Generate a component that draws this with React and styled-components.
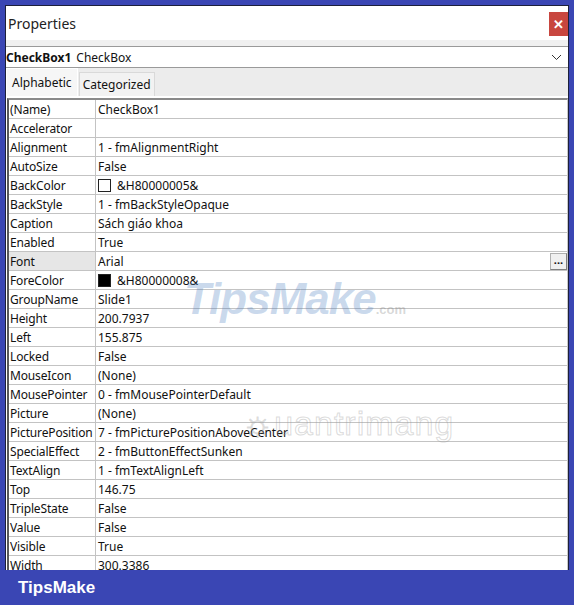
import React from "react";
import styled, { createGlobalStyle } from "styled-components";

const GlobalStyle = createGlobalStyle`
  html, body {
    margin: 0;
    padding: 0;
    background: #3a46b4;
  }
  body {
    font-family: "Noto Sans", "Open Sans", Arial, sans-serif;
  }
`;

const rows = [
  ["(Name)", "CheckBox1"],
  ["Accelerator", ""],
  ["Alignment", "1 - fmAlignmentRight"],
  ["AutoSize", "False"],
  ["BackColor", "&H80000005&", "#ffffff"],
  ["BackStyle", "1 - fmBackStyleOpaque"],
  ["Caption", "Sách giáo khoa"],
  ["Enabled", "True"],
  ["Font", "Arial", null, true],
  ["ForeColor", "&H80000008&", "#000000"],
  ["GroupName", "Slide1"],
  ["Height", "200.7937"],
  ["Left", "155.875"],
  ["Locked", "False"],
  ["MouseIcon", "(None)"],
  ["MousePointer", "0 - fmMousePointerDefault"],
  ["Picture", "(None)"],
  ["PicturePosition", "7 - fmPicturePositionAboveCenter"],
  ["SpecialEffect", "2 - fmButtonEffectSunken"],
  ["TextAlign", "1 - fmTextAlignLeft"],
  ["Top", "146.75"],
  ["TripleState", "False"],
  ["Value", "False"],
  ["Visible", "True"],
  ["Width", "300.3386"],
];

const Frame = styled.div`
  width: 574px;
  height: 605px;
  display: flex;
  flex-direction: column;
  background: #3a46b4;
`;

const Window = styled.div`
  position: relative;
  flex: 1;
  min-height: 0;
  margin: 5px 5px 0 5px;
  border: 1px solid #1c1f3a;
  border-bottom: none;
  background: #ffffff;
  display: flex;
  flex-direction: column;
  overflow: hidden;
`;

const TitleBar = styled.div`
  height: 34px;
  display: flex;
  align-items: center;
  justify-content: space-between;
  padding-left: 2px;
  font-size: 14px;
  color: #222;
`;

const CloseButton = styled.div`
  width: 19px;
  height: 24px;
  margin-top: 2px;
  background: #c8463f;
  color: #fff;
  font-size: 13px;
  font-weight: bold;
  display: flex;
  align-items: center;
  justify-content: center;
`;

const Strip = styled.div`
  height: 6px;
  background: #f0f0f0;
`;

const Combo = styled.div`
  height: 20px;
  border-top: 1px solid #9a9a9a;
  border-bottom: 1px solid #9a9a9a;
  display: flex;
  align-items: center;
  font-size: 12px;
  color: #111;
  padding-right: 6px;
  b {
    font-weight: 700;
    margin-right: 5px;
  }
  span {
    flex: 1;
  }
`;

const TabArea = styled.div`
  height: 28px;
  background: #ececec;
  display: flex;
  align-items: flex-end;
  border-bottom: 2px solid #ffffff;
`;

const Tab = styled.div`
  height: ${(p) => (p.$active ? "27px" : "23px")};
  padding: 0 ${(p) => (p.$active ? "5px" : "3px")};
  display: flex;
  align-items: center;
  font-size: 12px;
  color: #111;
  background: ${(p) => (p.$active ? "#f6f6f6" : "#f2f2f2")};
  border: 1px solid ${(p) => (p.$active ? "#ffffff" : "#d9d9d9")};
  border-bottom: none;
  margin-right: 1px;
`;

const Grid = styled.div`
  margin-left: 1px;
  border-left: 2px solid #5a5a5a;
  border-top: 2px solid #8a8a8a;
  border-right: 1px solid #c8c8c8;
  flex: 1;
  overflow: hidden;
`;

const Row = styled.div`
  display: grid;
  grid-template-columns: 87px 1fr;
  height: 19px;
  border-bottom: 1px solid #c3c3c3;
  box-sizing: border-box;
  font-size: 12px;
  color: #111;
`;

const NameCell = styled.div`
  padding-left: 1px;
  display: flex;
  align-items: center;
  border-right: 1px solid #c3c3c3;
  background: ${(p) => (p.$selected ? "#e6e6e6" : "transparent")};
  white-space: nowrap;
  overflow: hidden;
  letter-spacing: -0.15px;
`;

const ValueCell = styled.div`
  padding-left: 2px;
  display: flex;
  align-items: center;
  white-space: nowrap;
  overflow: hidden;
`;

const Swatch = styled.span`
  width: 13px;
  height: 13px;
  box-sizing: border-box;
  border: 1px solid #222;
  background: ${(p) => p.$color};
  margin-right: 6px;
  flex: none;
`;

const DotsButton = styled.div`
  margin-left: auto;
  width: 17px;
  height: 17px;
  box-sizing: border-box;
  border: 1px solid #b0b0b0;
  border-right-color: #808080;
  border-bottom-color: #808080;
  background: #f0f0f0;
  font-size: 11px;
  font-weight: bold;
  display: flex;
  align-items: center;
  justify-content: center;
  line-height: 1;
  padding-bottom: 3px;
`;

const Watermark = styled.div`
  position: absolute;
  left: ${(p) => p.$x}px;
  top: ${(p) => p.$y}px;
  pointer-events: none;
  white-space: nowrap;
`;

const TipsMark = styled.span`
  font-family: "Liberation Sans", Arial, sans-serif;
  font-weight: 900;
  font-style: italic;
  font-size: 44px;
  letter-spacing: -1px;
  color: rgba(70, 120, 190, 0.28);
  small {
    font-size: 13px;
    font-style: normal;
    letter-spacing: 0;
    color: rgba(120, 120, 120, 0.3);
  }
`;

const QuanMark = styled.span`
  font-family: "Liberation Sans", Arial, sans-serif;
  font-size: 34px;
  color: rgba(255, 255, 255, 0);
  -webkit-text-stroke: 1px rgba(150, 150, 150, 0.35);
  letter-spacing: 1px;
`;

const Footer = styled.div`
  height: 35px;
  flex: none;
  display: flex;
  align-items: center;
  padding-left: 18px;
  font-family: "Liberation Sans", Arial, sans-serif;
  font-weight: 700;
  font-size: 17px;
  color: #ffffff;
`;

const Chevron = () => (
  <svg width="11" height="7" viewBox="0 0 11 7">
    <path d="M1 1 L5.5 5.5 L10 1" fill="none" stroke="#333" strokeWidth="1" />
  </svg>
);

export default function App() {
  return (
    <Frame>
      <GlobalStyle />
      <Window>
        <TitleBar>
          Properties
          <CloseButton>✕</CloseButton>
        </TitleBar>
        <Strip />
        <Combo>
          <b>CheckBox1</b>
          <span>CheckBox</span>
          <Chevron />
        </Combo>
        <TabArea>
          <Tab $active>Alphabetic</Tab>
          <Tab>Categorized</Tab>
        </TabArea>
        <Grid>
          {rows.map(([name, value, color, selected]) => (
            <Row key={name}>
              <NameCell $selected={selected}>{name}</NameCell>
              <ValueCell>
                {color && <Swatch $color={color} />}
                {value}
                {selected && <DotsButton>...</DotsButton>}
              </ValueCell>
            </Row>
          ))}
        </Grid>
        <Watermark $x={178} $y={268}>
          <TipsMark>
            TipsMake<small>.com</small>
          </TipsMark>
        </Watermark>
        <Watermark $x={236} $y={398}>
          <QuanMark>☼uantrimang</QuanMark>
        </Watermark>
      </Window>
      <Footer>TipsMake</Footer>
    </Frame>
  );
}
